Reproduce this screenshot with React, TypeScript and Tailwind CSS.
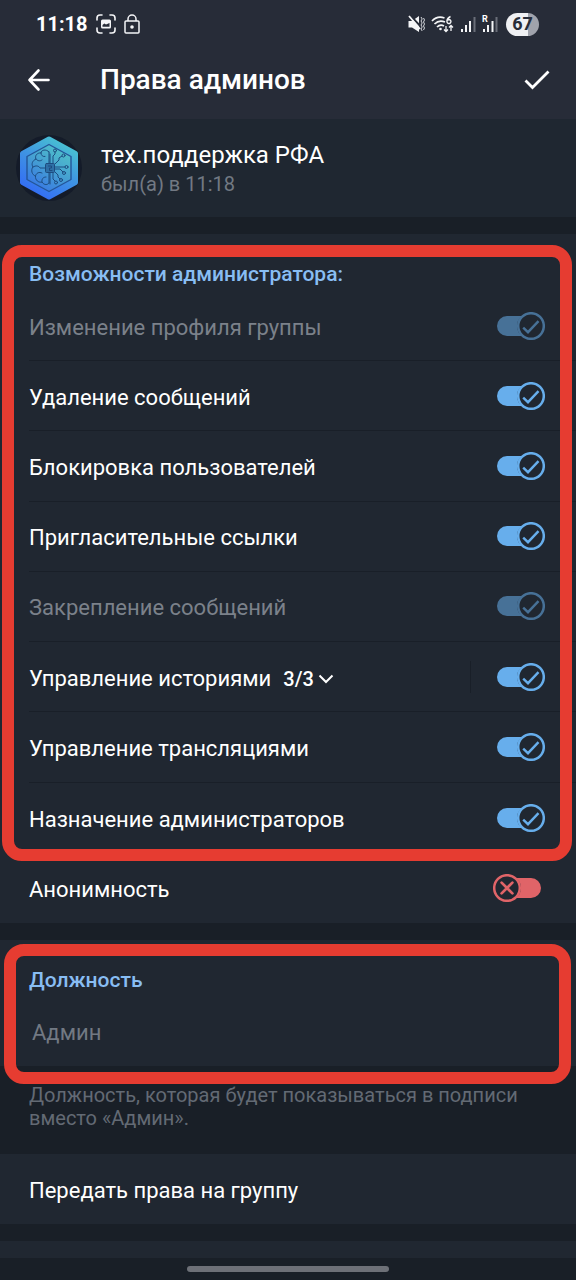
import { useState } from "react";

type Right = {
  id: string;
  label: string;
  on: boolean;
  disabled?: boolean;
  count?: string;
};

const RIGHTS: Right[] = [
  { id: "profile", label: "Изменение профиля группы", on: true, disabled: true },
  { id: "delete", label: "Удаление сообщений", on: true },
  { id: "ban", label: "Блокировка пользователей", on: true },
  { id: "invite", label: "Пригласительные ссылки", on: true },
  { id: "pin", label: "Закрепление сообщений", on: true, disabled: true },
  { id: "stories", label: "Управление историями", on: true, count: "3/3" },
  { id: "streams", label: "Управление трансляциями", on: true },
  { id: "promote", label: "Назначение администраторов", on: true },
  { id: "anonymous", label: "Анонимность", on: false },
];

function Toggle({ id, on, disabled, onChange }: { id: string; on: boolean; disabled?: boolean; onChange: () => void }) {
  return (
    <span className={`relative block h-7 w-[52px] shrink-0 ${disabled ? "opacity-55" : ""}`}>
      <input
        id={id}
        type="checkbox"
        role="switch"
        checked={on}
        disabled={disabled}
        onChange={onChange}
        className="absolute inset-0 m-0 h-full w-full cursor-pointer appearance-none rounded-full"
      />
      <svg viewBox="0 0 52 28" fill="none" className="pointer-events-none relative h-7 w-[52px]" aria-hidden="true">
        {on ? (
          <>
            <path d="M14 4H29Q24 8 24 14Q24 20 29 24H14A10 10 0 0 1 14 4Z" fill="#67aeec" />
            <circle cx="38" cy="14" r="12.8" stroke="#67aeec" strokeWidth="2.5" />
            <path d="M30.2 15.6L35 20.2L45.5 9.2" stroke="#67aeec" strokeWidth="2.4" />
          </>
        ) : (
          <>
            <path d="M38 4H23Q28 8 28 14Q28 20 23 24H38A10 10 0 0 0 38 4Z" fill="#e06468" />
            <circle cx="14" cy="14" r="12.8" stroke="#e06468" strokeWidth="2.5" />
            <path d="M8.6 8.6L19.4 19.4M19.4 8.6L8.6 19.4" stroke="#e06468" strokeWidth="2.7" strokeLinecap="round" />
          </>
        )}
      </svg>
    </span>
  );
}

function Avatar() {
  return (
    <svg viewBox="0 0 68 68" fill="none" className="h-[68px] w-[68px] shrink-0" aria-hidden="true">
      <defs>
        <linearGradient id="hexRim" x1="54" y1="6" x2="20" y2="62" gradientUnits="userSpaceOnUse">
          <stop stopColor="#4ac7cf" />
          <stop offset="0.5" stopColor="#3f94e2" />
          <stop offset="1" stopColor="#336cf5" />
        </linearGradient>
        <linearGradient id="hexCore" x1="50" y1="16" x2="24" y2="56" gradientUnits="userSpaceOnUse">
          <stop stopColor="#4fc0ca" />
          <stop offset="0.5" stopColor="#459fd2" />
          <stop offset="1" stopColor="#3878e4" />
        </linearGradient>
      </defs>
      <circle cx="34" cy="34" r="33" fill="#141b29" />
      <path d="M34 5L60.500 19.500V48.500L34 63L7.500 48.500V19.500Z" fill="url(#hexRim)" stroke="url(#hexRim)" strokeWidth="5" strokeLinejoin="round" />
      <path d="M34 10.500L56 22.500V45.500L34 57.500L12 45.500V22.500Z" fill="url(#hexCore)" stroke="#245699" strokeWidth="1.400" strokeLinejoin="round" />
      <g stroke="#1d4c80" strokeWidth="1" strokeLinecap="round" strokeLinejoin="round">
        <path d="M34 18C31 14.500 26 16 26 19C22 18.500 19.500 22 21 25C17.500 26.500 16 30 18 33C15.500 36 17 41 20.500 42C20 46 23.500 49 27 48C29 51.500 33 51 34 49" />
        <path d="M34 18V29M34 39V49M26 19C26 21.500 28 23 30 22.500M21 25C22.500 27 25 27.500 27 26M18 33C21 31 24 32 25 34H30M20.500 42C21 39 24 37.500 27 39M27 48C26.500 45 28 43 31 43" />
        <rect x="30.500" y="29.500" width="9" height="9" rx="1" fill="#2e6fa6" />
        <path d="M33.500 32H36.500V34H34.500V36.500H37" />
        <path d="M35 29V20M38 29V22L40 20V18M40 30L44 26V24L47 22M40 33H50M40 35H45L48 38M40 38L43 41V43L45 45M38 39V45L40 47M35 39V50" />
        <circle cx="40" cy="16.500" r="1.500" />
        <circle cx="48.500" cy="21.500" r="1.500" />
        <circle cx="51.500" cy="33" r="1.500" />
        <circle cx="49" cy="39" r="1.500" />
        <circle cx="46" cy="46" r="1.500" />
        <circle cx="41" cy="48.500" r="1.500" />
      </g>
    </svg>
  );
}

function StatusBar() {
  return (
    <div className="flex h-12 items-center justify-between pr-[37px] pl-9 text-white">
      <div className="flex items-center gap-2">
        <span className="text-[20px] leading-6 font-bold">11:18</span>
        <svg viewBox="0 0 20 20" fill="none" stroke="#f4f5f7" strokeWidth="1.6" strokeLinecap="round" className="h-5 w-5" aria-hidden="true">
          <path d="M1 6V4A3 3 0 0 1 4 1H6M14 1H16A3 3 0 0 1 19 4V6M19 14V16A3 3 0 0 1 16 19H14M6 19H4A3 3 0 0 1 1 16V14" />
          <rect x="5" y="5.500" width="10" height="9" rx="1.500" fill="#f4f5f7" stroke="none" />
          <path d="M6.500 12.800V11L8.300 9.500L10 10.500L13.500 9V12.800Z" fill="#272c38" stroke="none" />
        </svg>
        <svg viewBox="0 0 16 20" fill="none" stroke="#f4f5f7" strokeWidth="1.500" className="h-5 w-4" aria-hidden="true">
          <rect x="1" y="7" width="14" height="12" rx="1" />
          <path d="M4 7V5A4 4 0 0 1 12 5V7" />
          <circle cx="8" cy="13" r="1.800" fill="#f4f5f7" stroke="none" />
        </svg>
      </div>
      <div className="flex items-center gap-[6px]">
        <svg viewBox="0 0 18 18" fill="none" className="h-[18px] w-[18px]" aria-hidden="true">
          <path d="M1.500 6H5L12 1V17L5 12.500H1.500Z" fill="#f4f5f7" />
          <path d="M3 0L14 12" stroke="#272c38" strokeWidth="2" />
          <path d="M2 1L13 14" stroke="#f4f5f7" strokeWidth="1.800" />
          <path d="M14 2L15.200 4L14 6L15.200 8L14 10L15.200 12L14 14L15.200 16M16.500 3L17.500 5L16.500 7L17.500 9L16.500 11L17.500 13L16.500 15" stroke="#d5d7dc" strokeWidth="1" />
        </svg>
        <svg viewBox="0 0 24 18" fill="none" stroke="#f4f5f7" strokeWidth="1.700" className="h-[18px] w-6" aria-hidden="true">
          <path d="M1 6C4.500 2.300 9 1.400 13.500 3M3.500 9C6.500 6 10.500 5.500 14 7M6 12C8 10 11 9.700 13 11" />
          <circle cx="9.500" cy="14" r="1.300" fill="#f4f5f7" stroke="none" />
          <path d="M19.500 1.500Q16 3 16 6A2 2 0 1 0 18 4.500Q17 4.500 16.500 5.500" strokeWidth="1.400" />
          <path d="M15 11V16.500M13 14.500L15 16.500L17 14.500M20 16V10.500M18 12.500L20 10.500L22 12.500" strokeWidth="1.300" />
        </svg>
        <svg viewBox="0 0 15 16" className="h-4 w-[15px]" fill="#f4f5f7" aria-hidden="true">
          <rect x="0" y="13" width="2" height="3" />
          <rect x="4" y="9" width="2" height="7" />
          <rect x="8" y="5" width="2" height="11" />
          <rect x="12.500" y="1" width="2" height="15" fill="#6a6e79" />
        </svg>
        <span className="relative block h-4 w-4">
          <svg viewBox="0 0 16 16" className="h-4 w-4" fill="#f4f5f7" aria-hidden="true">
            <rect x="1" y="13" width="2" height="3" />
            <rect x="5" y="9" width="2" height="7" />
            <rect x="9.500" y="5" width="2" height="11" />
            <rect x="13.500" y="1" width="2" height="15" fill="#6a6e79" />
          </svg>
          <span className="absolute -top-px left-0 text-[9px] leading-[9px] font-bold">R</span>
        </span>
        <span className="ml-[2px] flex h-[23px] w-[33px] items-center justify-center rounded-full bg-linear-to-r from-[#eff0f3] from-67% to-[#a0a3ac] to-67% text-[18px] leading-5 font-bold text-[#272c38]">
          67
        </span>
      </div>
    </div>
  );
}

const FRAME = "pointer-events-none absolute border-12 border-[#e63c31] rounded-[20px]";

export default function App() {
  const [rights, setRights] = useState(RIGHTS);
  const [role, setRole] = useState("");

  const flip = (id: string) => setRights((list) => list.map((r) => (r.id === id ? { ...r, on: !r.on } : r)));

  return (
    <div className="flex min-h-screen flex-col bg-[#191f27] font-['Roboto',sans-serif] text-white">
      <header className="bg-[#272c38] pb-[7px]">
        <StatusBar />
        <div className="flex h-16 items-center pr-[25px] pl-[26px]">
          <button type="button" aria-label="Назад" className="h-6 w-6">
            <svg viewBox="0 0 24 24" fill="none" stroke="#fff" strokeWidth="2.600" strokeLinecap="round" strokeLinejoin="round" aria-hidden="true">
              <path d="M12.500 2.500L3.500 12L12.500 21.500M3.500 12H22.500" />
            </svg>
          </button>
          <h1 className="flex-1 pl-[50px] text-[28px] leading-8 font-medium">Права админов</h1>
          <button type="button" aria-label="Сохранить" className="h-7 w-7">
            <svg viewBox="0 0 28 28" fill="none" stroke="#fff" strokeWidth="2.800" aria-hidden="true">
              <path d="M2.500 14.500L9.500 21.500L25.500 5.500" />
            </svg>
          </button>
        </div>
      </header>

      <section className="flex h-[98px] items-center gap-[18px] bg-[#1f2731] pl-[15px]">
        <Avatar />
        <div>
          <p className="text-[24px] leading-7">тех.поддержка РФА</p>
          <p className="pt-[3px] text-[20px] leading-6 text-[#727983]">был(а) в 11:18</p>
        </div>
      </section>

      <section className="relative mt-[17px] bg-[#202731] pt-[25px]">
        <h2 className="mb-[2px] px-[29px] text-[21px] leading-[30px] font-medium text-[#88bdf3]">Возможности администратора:</h2>
        <ul className="grid min-h-[632px] auto-rows-fr pl-[29px]">
          {rights.map((r, i) => (
            <li
              key={r.id}
              className={`flex items-center justify-between pr-[31px] ${i < rights.length - 2 ? "border-b border-[#191f28]" : ""}`}
            >
              <div className="flex items-center gap-3 pt-1">
                <label htmlFor={r.id} className={`text-[22px] leading-7 ${r.disabled ? "text-[#7b818a]" : ""}`}>
                  {r.label}
                </label>
                {r.count && (
                  <button type="button" className="flex items-center gap-1 text-[20px] leading-6 font-medium">
                    {r.count}
                    <svg viewBox="0 0 16 10" fill="none" stroke="#fff" strokeWidth="2" className="h-[10px] w-4" aria-hidden="true">
                      <path d="M1.500 1.500L8 8L14.500 1.500" />
                    </svg>
                  </button>
                )}
              </div>
              <div className="flex items-center">
                {r.count && <span className="mr-[22px] h-8 w-px bg-[#191f28]" />}
                <Toggle id={r.id} on={r.on} disabled={r.disabled} onChange={() => flip(r.id)} />
              </div>
            </li>
          ))}
        </ul>
        <div className={`${FRAME} top-[11px] right-1 bottom-[62px] left-[2px]`} />
      </section>

      <section className="relative mt-[17px] bg-[#202731] pt-[25px] pb-4">
        <label htmlFor="role" className="block px-[29px] text-[21px] leading-[30px] font-medium text-[#88bdf3]">
          Должность
        </label>
        <input
          id="role"
          type="text"
          value={role}
          placeholder="Админ"
          onChange={(e) => setRole(e.target.value)}
          className="mt-[19px] block h-9 w-full bg-transparent px-8 text-[22px] leading-7 outline-none placeholder:text-[#727983]"
        />
        <div className={`${FRAME} top-1 right-[5px] -bottom-[18px] left-1`} />
      </section>

      <p className="px-[29px] pt-[18px] pb-6 text-[20px] leading-[23px] text-[#636a74]">
        Должность, которая будет показываться в подписи вместо «Админ».
      </p>

      <button type="button" className="h-[70px] bg-[#202731] px-[29px] pt-1 text-left text-[22px] leading-7">
        Передать права на группу
      </button>

      <div className="mt-[17px] h-[17px] bg-[#202731]" />
      <div className="flex flex-1 items-start justify-center pt-2">
        <div className="h-[6px] w-[202px] rounded-full bg-[#6d7077]" />
      </div>
    </div>
  );
}
